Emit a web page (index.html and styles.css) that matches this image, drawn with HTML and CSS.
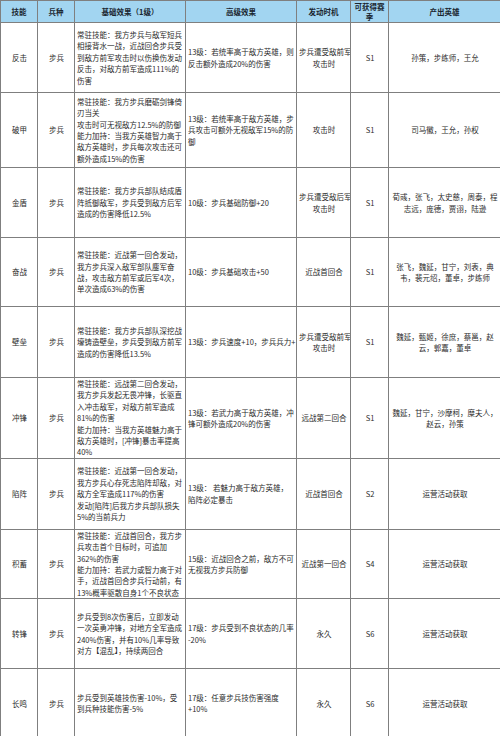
FILE: index.html
```html
<!DOCTYPE html>
<html lang="zh-CN">
<head>
<meta charset="utf-8">
<title>步兵技能</title>
<link rel="stylesheet" href="styles.css">
</head>
<body>
<table class="skills">
  <colgroup>
    <col class="c-name"><col class="c-type"><col class="c-base"><col class="c-adv"><col class="c-time"><col class="c-season"><col class="c-hero">
  </colgroup>
  <thead>
    <tr class="head">
      <th>技能</th><th>兵种</th><th>基础效果（1级）</th><th>高级效果</th><th>发动时机</th><th>可获得赛<br>季</th><th>产出英雄</th>
    </tr>
  </thead>
  <tbody>
    <tr class="r1">
      <td class="ctr">反击</td><td class="ctr">步兵</td>
      <td class="txt">常驻技能：我方步兵与敌军短兵<br>相接背水一战，近战回合步兵受<br>到敌方前军攻击时以伤换伤发动<br>反击，对敌方前军造成111%的<br>伤害</td>
      <td class="txt">13级：若统率高于敌方英雄，则<br>反击额外造成20%的伤害</td>
      <td class="ctr">步兵遭受敌前军<br>攻击时</td><td class="ctr">S1</td><td class="ctr">孙策，步练师，王允</td>
    </tr>
    <tr class="r2">
      <td class="ctr">破甲</td><td class="ctr">步兵</td>
      <td class="txt">常驻技能：我方步兵磨砺剑锋倚<br>刃当关<br>攻击时可无视敌方12.5%的防御<br>能力加持：当我方英雄智力高于<br>敌方英雄时，步兵每次攻击还可<br>额外造成15%的伤害</td>
      <td class="txt">13级：若统率高于敌方英雄，步<br>兵攻击可额外无视敌军15%的防<br>御</td>
      <td class="ctr">攻击时</td><td class="ctr">S1</td><td class="ctr">司马徽，王允，孙权</td>
    </tr>
    <tr class="r3">
      <td class="ctr">金盾</td><td class="ctr">步兵</td>
      <td class="txt">常驻技能：我方步兵部队结成盾<br>阵抵御敌军，步兵受到敌方后军<br>造成的伤害降低12.5%</td>
      <td class="txt">10级：步兵基础防御+20</td>
      <td class="ctr">步兵遭受敌后军<br>攻击时</td><td class="ctr">S1</td><td class="ctr">荀彧，张飞，太史慈，周泰，程<br>志远，庞德，贾诩，陆逊</td>
    </tr>
    <tr class="r4">
      <td class="ctr">奋战</td><td class="ctr">步兵</td>
      <td class="txt">常驻技能：近战第一回合发动，<br>我方步兵深入敌军部队鏖军奋<br>战，攻击敌方前军或后军4次，<br>单次造成63%的伤害</td>
      <td class="txt">10级：步兵基础攻击+50</td>
      <td class="ctr">近战首回合</td><td class="ctr">S1</td><td class="ctr">张飞，魏延，甘宁，刘表，典<br>韦，裴元绍，董卓，步练师</td>
    </tr>
    <tr class="r5">
      <td class="ctr">壁垒</td><td class="ctr">步兵</td>
      <td class="txt">常驻技能：我方步兵部队深挖战<br>壕铸造壁垒，步兵受到敌方前军<br>造成的伤害降低13.5%</td>
      <td class="txt">13级：步兵速度+10，步兵兵力+</td>
      <td class="ctr">步兵遭受敌前军<br>攻击时</td><td class="ctr">S1</td><td class="ctr">魏延，甄姬，徐庶，蔡邕，赵<br>云，郭嘉，董卓</td>
    </tr>
    <tr class="r6">
      <td class="ctr">冲锋</td><td class="ctr">步兵</td>
      <td class="txt">常驻技能：远战第二回合发动，<br>我方步兵发起无畏冲锋，长驱直<br>入冲击敌军，对敌方前军造成<br>81%的伤害<br>能力加持：当我方英雄魅力高于<br>敌方英雄时，[冲锋]暴击率提高<br>40%</td>
      <td class="txt">13级：若武力高于敌方英雄，冲<br>锋可额外造成20%的伤害</td>
      <td class="ctr">远战第二回合</td><td class="ctr">S1</td><td class="ctr">魏延，甘宁，沙摩柯，糜夫人，<br>赵云，孙策</td>
    </tr>
    <tr class="r7">
      <td class="ctr">陷阵</td><td class="ctr">步兵</td>
      <td class="txt">常驻技能：近战第一回合发动，<br>我方步兵心存死志陷阵却敌，对<br>敌方全军造成117%的伤害<br>发动[陷阵]后我方步兵部队损失<br>5%的当前兵力</td>
      <td class="txt">13级：&nbsp;若魅力高于敌方英雄，<br>陷阵必定暴击</td>
      <td class="ctr">近战首回合</td><td class="ctr">S2</td><td class="ctr">运营活动获取</td>
    </tr>
    <tr class="r8">
      <td class="ctr">积蓄</td><td class="ctr">步兵</td>
      <td class="txt">常驻技能：近战首回合，我方步<br>兵攻击首个目标时，可追加<br>362%的伤害<br>能力加持：若武力或智力高于对<br>手，近战首回合步兵行动前，有<br>13%概率驱散自身1个不良状态</td>
      <td class="txt">15级：近战回合之前，敌方不可<br>无视我方步兵防御</td>
      <td class="ctr">近战第一回合</td><td class="ctr">S4</td><td class="ctr">运营活动获取</td>
    </tr>
    <tr class="r9">
      <td class="ctr">转锋</td><td class="ctr">步兵</td>
      <td class="txt">步兵受到8次伤害后，立即发动<br>一次英勇冲锋，对地方全军造成<br>240%伤害，并有10%几率导致<br>对方【混乱】，持续两回合</td>
      <td class="txt">17级：步兵受到不良状态的几率<br>-20%</td>
      <td class="ctr">永久</td><td class="ctr">S6</td><td class="ctr">运营活动获取</td>
    </tr>
    <tr class="r10">
      <td class="ctr">长鸣</td><td class="ctr">步兵</td>
      <td class="txt">步兵受到英雄技伤害-10%，受<br>到兵种技能伤害-5%</td>
      <td class="txt">17级：任意步兵技伤害强度<br>+10%</td>
      <td class="ctr">永久</td><td class="ctr">S6</td><td class="ctr">运营活动获取</td>
    </tr>
  </tbody>
</table>
</body>
</html>
```
FILE: styles.css
```css
html, body {
  margin: 0;
  padding: 0;
  background: #ffffff;
}

.skills {
  width: 500px;
  border-collapse: collapse;
  table-layout: fixed;
  font-family: "Noto Sans CJK SC", "Microsoft YaHei", sans-serif;
  font-size: 7.5px;
  line-height: 11.4px;
  color: #2b2b2b;
}

.c-name { width: 37px; }
.c-type { width: 37px; }
.c-base { width: 111px; }
.c-adv { width: 111px; }
.c-time { width: 54px; }
.c-season { width: 38px; }
.c-hero { width: 112px; }

.skills th,
.skills td {
  border: 1px solid #7f7f7f;
  padding: 0 1px 0 2px;
  vertical-align: middle;
  overflow: hidden;
  white-space: nowrap;
}

.head th {
  background: #a2d5f1;
  color: #1a2630;
  font-weight: bold;
  text-align: center;
  height: 21px;
  line-height: 9.5px;
  padding: 0;
}

.ctr { text-align: center; }
.txt { text-align: left; }

.r1 td { height: 69px; }
.r2 td { height: 74px; }
.r3 td { height: 69px; }
.r4 td { height: 68px; }
.r5 td { height: 70px; }
.r6 td { height: 78px; }
.r7 td { height: 70px; }
.r8 td { height: 68px; }
.r9 td { height: 69px; }
.r10 td { height: 68px; }
```
